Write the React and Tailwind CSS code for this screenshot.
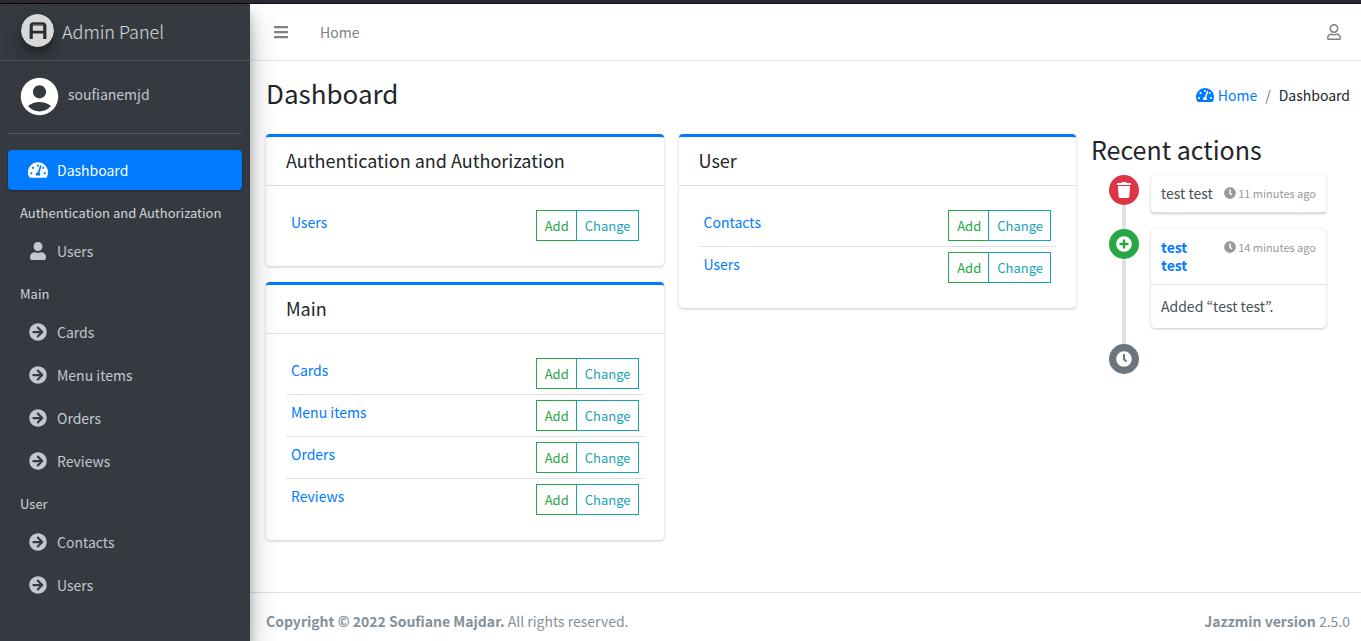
import {
  FaArrowCircleRight,
  FaBars,
  FaClock,
  FaPlusCircle,
  FaRegUser,
  FaTachometerAlt,
  FaTrash,
  FaUser,
} from "react-icons/fa";
import { MdAccountCircle } from "react-icons/md";

const sections = [
  { title: "Authentication and Authorization", icon: FaUser, items: ["Users"] },
  { title: "Main", icon: FaArrowCircleRight, items: ["Cards", "Menu items", "Orders", "Reviews"] },
  { title: "User", icon: FaArrowCircleRight, items: ["Contacts", "Users"] },
];

function Logo() {
  return (
    <svg viewBox="0 0 33 33" className="size-[33px] rounded-full shadow-[0_10px_20px_rgba(0,0,0,0.19),0_6px_6px_rgba(0,0,0,0.23)]" aria-hidden="true">
      <circle cx="16.5" cy="16.5" r="16.5" fill="#d7d8da" />
      <path d="M10.2 25V12.400a2.500 2.500 0 0 1 2.500-2.500h8.600a2.500 2.500 0 0 1 2.500 2.500V25" fill="none" stroke="#2c2c31" strokeWidth="3.200" />
      <path d="M10.200 18.200h13.600" stroke="#2c2c31" strokeWidth="2.800" />
      <path d="M11.500 10.600h11" stroke="#606167" strokeWidth="0.800" />
    </svg>
  );
}

function Sidebar() {
  return (
    <aside className="relative z-10 w-[250px] shrink-0 bg-[#343a40] text-[#c2c7d0] shadow-[0_14px_28px_rgba(0,0,0,0.25),0_10px_10px_rgba(0,0,0,0.22)]">
      <a href="#" className="flex h-[57px] items-center gap-2 border-b border-[#4b545c] pb-1 pl-[21px] text-[18px] font-light text-white/80">
        <Logo />
        <span className="pt-[2px]">Admin Panel</span>
      </a>
      <div className="mx-2 flex h-[73px] items-center gap-[6px] border-b border-[#4f5962] pb-[2px] pl-[9px]">
        <MdAccountCircle className="size-[45px] text-white" />
        <a href="#" className="pb-1">soufianemjd</a>
      </div>
      <nav className="px-2 pt-4">
        <a href="#" className="mb-[3px] flex h-10 items-center gap-[9px] rounded bg-[#007bff] pl-5 text-white shadow-[0_1px_3px_rgba(0,0,0,0.12),0_1px_2px_rgba(0,0,0,0.24)]">
          <FaTachometerAlt className="size-5" />
          Dashboard
        </a>
        {sections.map(({ title, icon: Icon, items }) => (
          <section key={title}>
            <h2 className="h-[38px] pt-2 pl-3 text-[13px] text-[#d0d4db]">{title}</h2>
            <ul>
              {items.map((item) => (
                <li key={item} className="mb-[3px]">
                  <a href="#" className="flex h-10 items-center pl-[21px]">
                    <Icon className="mr-[10px] size-[18px]" />
                    {item}
                  </a>
                </li>
              ))}
            </ul>
          </section>
        ))}
      </nav>
    </aside>
  );
}

function ModelCard({ title, items }) {
  return (
    <section className="rounded border-t-[3px] border-[#007bff] bg-white shadow-[0_0_1px_rgba(0,0,0,0.13),0_1px_3px_rgba(0,0,0,0.2)]">
      <h2 className="border-b border-black/12 px-5 pt-[11px] pb-[13px] text-[18px]">{title}</h2>
      <div className="px-5 pt-[19px] pb-5">
        <table className="w-full border-collapse">
          <tbody className="divide-y divide-[#dee2e6]">
            {items.map((item) => (
              <tr key={item}>
                <td className="p-[5px] align-top">
                  <a href="#" className="text-[#007bff]">{item}</a>
                </td>
                <td className="p-[5px]">
                  <div className="flex justify-end text-[13px]">
                    <a href="#" className="-mr-px flex h-[31px] items-center border border-[#28a745] pr-[7px] pl-2 text-[#28a745]">Add</a>
                    <a href="#" className="flex h-[31px] items-center border border-[#17a2b8] pr-[7px] pl-2 text-[#17a2b8]">Change</a>
                  </div>
                </td>
              </tr>
            ))}
          </tbody>
        </table>
      </div>
    </section>
  );
}

function TimelineItem({ icon: Icon, color, children }) {
  return (
    <li className="relative flex items-start gap-3 pl-[18px]">
      <span className={`flex size-[30px] shrink-0 items-center justify-center rounded-full text-white ${color}`}>
        <Icon className="size-4" />
      </span>
      {children}
    </li>
  );
}

function TimelineCard({ title, time, body }) {
  return (
    <article className="mr-6 grow rounded bg-white text-[#495057] shadow-[0_0_1px_rgba(0,0,0,0.13),0_1px_3px_rgba(0,0,0,0.2)]">
      <header className="flex items-start justify-between gap-[10px] border-b border-black/12 px-[10px] pt-[9px] pb-[10px] leading-[18px]">
        <h3>{title}</h3>
        <time className="flex shrink-0 items-center gap-[2px] text-[11px] text-[#999]">
          <FaClock className="size-3" />
          {time}
        </time>
      </header>
      {body && <p className="px-[10px] pt-[9px] pb-[10px]">{body}</p>}
    </article>
  );
}

function RecentActions() {
  return (
    <section>
      <h2 className="mb-[11px] text-[25px] leading-[30px]">Recent actions</h2>
      <ol className="relative flex flex-col gap-4 before:absolute before:inset-y-0 before:left-[31px] before:w-1 before:bg-[#dee2e6]">
        <TimelineItem icon={FaTrash} color="bg-[#dc3545]">
          <TimelineCard title="test test" time="11 minutes ago" />
        </TimelineItem>
        <TimelineItem icon={FaPlusCircle} color="bg-[#28a745]">
          <TimelineCard
            title={<a href="#" className="font-bold text-[#007bff]">test test</a>}
            time="14 minutes ago"
            body="Added “test test”."
          />
        </TimelineItem>
        <TimelineItem icon={FaClock} color="bg-[#6c757d]" />
      </ol>
    </section>
  );
}

export default function App() {
  return (
    <div className="flex min-h-screen flex-col bg-white font-['Noto_Sans_CJK_KR',sans-serif] text-[14px] leading-6 text-[#212529]">
      <div className="h-1 border-b border-[#0c0c0d] bg-[#2b2a33]" />
      <div className="flex grow">
        <Sidebar />
        <div className="flex min-w-0 grow flex-col">
          <header className="flex h-[57px] items-center border-b border-[#dee2e6] pr-[19px] pl-[23px] text-[#808080]">
            <button type="button" aria-label="Toggle sidebar" className="mr-[31px]">
              <FaBars className="size-4" />
            </button>
            <a href="#">Home</a>
            <button type="button" aria-label="Account" className="ml-auto">
              <FaRegUser className="size-4" />
            </button>
          </header>
          <main className="grow pr-[11px] pl-4">
            <div className="flex h-[73px] items-center justify-between pb-[6px]">
              <h1 className="pb-[3px] text-[26px]">Dashboard</h1>
              <nav aria-label="Breadcrumb" className="flex items-center gap-2">
                <a href="#" className="flex items-center gap-1 text-[#007bff]">
                  <FaTachometerAlt className="size-[18px]" />
                  Home
                </a>
                <span className="text-[#6c757d]">/</span>
                <span>Dashboard</span>
              </nav>
            </div>
            <div className="grid grid-cols-[minmax(0,1fr)_minmax(0,1fr)_259px] items-start gap-[15px]">
              <div className="flex flex-col gap-4">
                <ModelCard title={sections[0].title} items={sections[0].items} />
                <ModelCard title={sections[1].title} items={sections[1].items} />
              </div>
              <ModelCard title={sections[2].title} items={sections[2].items} />
              <RecentActions />
            </div>
          </main>
          <footer className="flex justify-between border-t border-[#dee2e6] pt-4 pr-[11px] pb-2 pl-4 text-[#869099]">
            <p><strong>Copyright © 2022 Soufiane Majdar.</strong> All rights reserved.</p>
            <p><strong>Jazzmin version</strong> 2.5.0</p>
          </footer>
        </div>
      </div>
    </div>
  );
}
